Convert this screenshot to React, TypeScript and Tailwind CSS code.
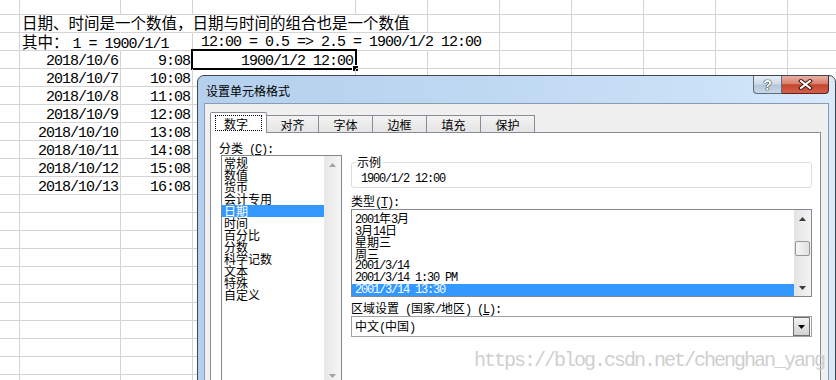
import React from "react";

const SA = "font-['Liberation_Mono',monospace] text-[15px] tracking-[-1px] leading-[17px]";
const SC = "font-['Noto_Sans_CJK_SC',sans-serif] text-[15.5px] tracking-normal leading-[14px]";
const DA = "font-['Liberation_Mono',monospace] text-[12px] tracking-[-1.2px] leading-[12px]";
const DC = "font-['Noto_Sans_CJK_SC',sans-serif] text-[12px] tracking-normal leading-[11px]";

function T({ s, a, c }: { s: string; a: string; c: string }) {
  const parts = s.match(/[\x20-\x7e]+|[^\x20-\x7e]+/g) ?? [];
  return (
    <>
      {parts.map((p, i) => (
        <span key={i} className={/^[\x20-\x7e]/.test(p) ? a : c}>
          {p}
        </span>
      ))}
    </>
  );
}

const WC = [
  "w-[20px]",
  "w-[101px]",
  "w-[72px]",
  "w-[163px]",
  "w-[72px]",
  "w-[72px]",
  "w-[72px]",
  "w-[72px]",
  "w-[72px]",
  "w-[72px]",
  "w-[72px]",
];

type Cell = { t?: React.ReactNode; r?: boolean; hide?: boolean; pl?: string; sel?: boolean };

function SheetRow({ h, pt, cells }: { h: string; pt: string; cells: Record<number, Cell> }) {
  return (
    <div className={`flex ${h}`}>
      {WC.map((w, i) => {
        const c = cells[i] ?? {};
        return (
          <div
            key={i}
            className={`relative shrink-0 ${w} h-full border-b border-r border-b-[#d4d4d4] ${
              c.hide ? "border-r-transparent" : "border-r-[#d4d4d4]"
            } ${c.r ? "text-right pr-[2px]" : c.pl ?? "pl-[2px]"} ${pt} whitespace-pre text-black ${SA}`}
          >
            {c.t ?? null}
            {c.sel ? (
              <>
                <div className="absolute left-[-2px] top-[-2px] w-[166px] h-[21px] border-2 border-black" />
                <div className="absolute left-[159px] top-[14px] w-[7px] h-[7px] bg-black border border-white" />
              </>
            ) : null}
          </div>
        );
      })}
    </div>
  );
}

const dates = [
  ["2018/10/6", "9:08"],
  ["2018/10/7", "10:08"],
  ["2018/10/8", "11:08"],
  ["2018/10/9", "12:08"],
  ["2018/10/10", "13:08"],
  ["2018/10/11", "14:08"],
  ["2018/10/12", "15:08"],
  ["2018/10/13", "16:08"],
];

function Sheet() {
  const empties = Array.from({ length: 11 });
  return (
    <div className="flex flex-col">
      <SheetRow h="h-[15px]" pt="pt-0" cells={{}} />
      <SheetRow
        h="h-[18px]"
        pt="pt-0"
        cells={{
          1: { t: <span className={SC}>日期、时间是一个数值，日期与时间的组合也是一个数值</span>, hide: true },
          2: { hide: true },
          3: { hide: true },
        }}
      />
      <SheetRow
        h="h-[18px]"
        pt="pt-[1px]"
        cells={{
          1: {
            t: (
              <>
                <span className={SC}>其中：</span>
                <span className={`${SA} ml-[4px]`}>1 = 1900/1/1</span>
              </>
            ),
            hide: true,
          },
          3: { t: "12:00 = 0.5 => 2.5 = 1900/1/2 12:00", hide: true, pl: "pl-[8px]" },
          4: { hide: true },
        }}
      />
      {dates.map(([d, t], i) => (
        <SheetRow
          key={d}
          h="h-[18px]"
          pt="pt-[2px]"
          cells={{
            1: { t: d, r: true },
            2: { t: t, r: true },
            ...(i === 0 ? { 3: { t: "1900/1/2 12:00", r: true, sel: true } } : {}),
          }}
        />
      ))}
      {empties.map((_, i) => (
        <SheetRow key={i} h="h-[18px]" pt="pt-0" cells={{}} />
      ))}
    </div>
  );
}

function Arrow({ dir, color }: { dir: "up" | "down"; color: string }) {
  return (
    <svg width="7" height="4" viewBox="0 0 7 4" className="block">
      <path d={dir === "up" ? "M3.5 0 L7 4 L0 4 Z" : "M0 0 L7 0 L3.5 4 Z"} fill={color} />
    </svg>
  );
}

const categories = ["常规", "数值", "货币", "会计专用", "日期", "时间", "百分比", "分数", "科学记数", "文本", "特殊", "自定义"];
const types = ["2001年3月", "3月14日", "星期三", "周三", "2001/3/14", "2001/3/14 1:30 PM", "2001/3/14 13:30"];
const tabs: [string, string][] = [
  ["对齐", "w-[52px]"],
  ["字体", "w-[54px]"],
  ["边框", "w-[54px]"],
  ["填充", "w-[54px]"],
  ["保护", "w-[54px]"],
];

function Dialog() {
  return (
    <div className="absolute left-[197px] top-[75px] w-[639px] h-[330px] rounded-t-[7px] border border-[#3e4650] bg-[linear-gradient(90deg,#b5d0ed_0%,#bfd8f2_45%,#cbe1f7_80%,#d8eafb_100%)] flex flex-col">
      {/* title bar */}
      <div className="h-[27px] shrink-0 flex items-start">
        <div className={`pl-[8px] pt-[9px] whitespace-pre text-black ${DC} leading-[12px]`}>设置单元格格式</div>
        <div className="ml-auto mr-[6px] flex h-[18px]">
          <div className="w-[29px] h-full border border-t-0 border-[#5b6c80] rounded-bl-[4px] bg-[linear-gradient(180deg,#e6edf5_0%,#cfdbe7_48%,#b6c6d8_52%,#c9d7e5_100%)] flex items-center justify-center">
            <span className="font-['Liberation_Sans',sans-serif] font-bold text-[14px] leading-[14px] text-white [text-shadow:0_0_1px_#1d2c3d,0_0_1px_#1d2c3d,0_0_1px_#1d2c3d]">
              ?
            </span>
          </div>
          <div className="w-[47px] h-full border border-t-0 border-l-0 border-[#5a2219] rounded-br-[4px] bg-[linear-gradient(180deg,#eab0a4_0%,#d9806e_45%,#c4452e_52%,#d4604a_100%)] flex items-center justify-center">
            <svg width="15" height="11" viewBox="0 0 15 11" className="block">
              <path d="M3 2 L12 9 M12 2 L3 9" stroke="#3b1610" strokeWidth="4" strokeLinecap="square" />
              <path d="M3 2 L12 9 M12 2 L3 9" stroke="#ffffff" strokeWidth="2" strokeLinecap="square" />
            </svg>
          </div>
        </div>
      </div>
      {/* body */}
      <div className="ml-[6px] mr-[6px] flex-1 min-h-0 bg-[#f0f0f0] border border-[#8a9cb0] pl-[5px] pr-[7px] pt-[8px] flex flex-col">
        <div className="flex items-end h-[20px] relative z-10">
          <div className="w-[57px] h-[21px] -mb-px bg-white border border-b-0 border-[#898c95] rounded-t-[2px] flex items-center justify-center">
            <span className={`border border-dotted border-black w-[47px] pl-[8px] h-[16px] flex items-center whitespace-pre ${DC} tracking-[8px] text-black`}>
              数字
            </span>
          </div>
          {tabs.map(([t, w]) => (
            <div
              key={t}
              className={`${w} h-[17px] border-t border-r border-[#898c95] bg-[linear-gradient(180deg,#f3f3f3,#e4e4e4)] flex items-center justify-center ${DC} text-black`}
            >
              {t}
            </div>
          ))}
        </div>
        <div className="flex-1 bg-white border border-[#898c95] flex">
          {/* left column */}
          <div className="ml-[10px] w-[121px] flex flex-col">
            <div className={`mt-[9px] -ml-[2px] h-[12px] whitespace-pre text-black ${DC} leading-[12px]`}>
              <span className={DC}>分类</span>
              <span className={DA}> (</span>
              <span className={`${DA} underline`}>C</span>
              <span className={DA}>):</span>
            </div>
            <div className="mt-[1px] w-[121px] h-[230px] border border-[#828790] flex">
              <div className="w-[102px] pt-[1px] flex flex-col">
                {categories.map((c) => (
                  <div
                    key={c}
                    className={`h-[12px] pl-[2px] whitespace-pre ${DC} ${c === "日期" ? "bg-[#3399ff] text-white" : "text-black"}`}
                  >
                    {c}
                  </div>
                ))}
              </div>
              <div className="w-[17px] h-full flex flex-col bg-[linear-gradient(90deg,#e8e8e8,#f4f4f4)]">
                <div className="h-[17px] flex items-center justify-center">
                  <Arrow dir="up" color="#a3a3a3" />
                </div>
                <div className="flex-1" />
                <div className="h-[17px] flex items-center justify-center">
                  <Arrow dir="down" color="#a3a3a3" />
                </div>
              </div>
            </div>
          </div>
          {/* right column */}
          <div className="ml-[9px] w-[461px] flex flex-col">
            <div className="relative mt-[29px] h-[26px] border border-[#d5dfe5] rounded-[3px]">
              <div className={`absolute left-[4px] top-[-7px] bg-white px-[1px] h-[12px] whitespace-pre text-black ${DC}`}>示例</div>
              <div className={`pl-[9px] pt-[10px] whitespace-pre text-black ${DA}`}>1900/1/2 12:00</div>
            </div>
            <div className={`mt-[7px] h-[12px] whitespace-pre text-black ${DC} leading-[12px]`}>
              <span className={DC}>类型</span>
              <span className={DA}>(</span>
              <span className={`${DA} underline`}>T</span>
              <span className={DA}>):</span>
            </div>
            <div className="mt-[2px] h-[88px] border border-[#828790] flex">
              <div className="flex-1 pt-[2px] flex flex-col">
                {types.map((t, i) => (
                  <div
                    key={t}
                    className={`h-[12px] pl-[3px] whitespace-pre ${DA} ${i === 6 ? "bg-[#3399ff] text-white" : "text-black"}`}
                  >
                    <T s={t} a={DA} c={DC} />
                  </div>
                ))}
              </div>
              <div className="w-[17px] h-full flex flex-col bg-[linear-gradient(90deg,#e3e3e3,#f3f3f3)]">
                <div className="h-[17px] flex items-center justify-center">
                  <Arrow dir="up" color="#3c3c3c" />
                </div>
                <div className="flex-1 flex flex-col">
                  <div className="mt-[14px] mx-[1px] h-[15px] rounded-[2px] border border-[#979797] bg-[linear-gradient(90deg,#f6f6f6,#e0e0e0)]" />
                </div>
                <div className="h-[17px] flex items-center justify-center">
                  <Arrow dir="down" color="#3c3c3c" />
                </div>
              </div>
            </div>
            <div className={`mt-[5px] h-[12px] whitespace-pre text-black ${DC} leading-[12px]`}>
              <span className={DC}>区域设置</span>
              <span className={DA}> (</span>
              <span className={DC}>国家</span>
              <span className={DA}>/</span>
              <span className={DC}>地区</span>
              <span className={DA}>) (</span>
              <span className={`${DA} underline`}>L</span>
              <span className={DA}>):</span>
            </div>
            <div className="mt-[2px] h-[21px] border border-[#a0a0a0] flex items-center">
              <div className={`flex-1 pl-[3px] whitespace-pre text-black ${DC} leading-[12px]`}>
                <T s="中文(中国)" a={DA} c={DC} />
              </div>
              <div className="w-[17px] h-[19px] mr-px border border-[#707070] bg-[linear-gradient(180deg,#f2f2f2,#d2d2d2)] flex items-center justify-center">
                <Arrow dir="down" color="#000000" />
              </div>
            </div>
          </div>
        </div>
      </div>
    </div>
  );
}

export default function App() {
  return (
    <div className="relative w-[836px] h-[380px] overflow-hidden bg-white">
      <Sheet />
      <Dialog />
      <div className="absolute left-[474px] top-[351px] whitespace-pre font-['Liberation_Mono',monospace] text-[20px] tracking-[-2px] leading-[20px] text-[#cfcfcf]">
        https://blog.csdn.net/chenghan_yang
      </div>
    </div>
  );
}
